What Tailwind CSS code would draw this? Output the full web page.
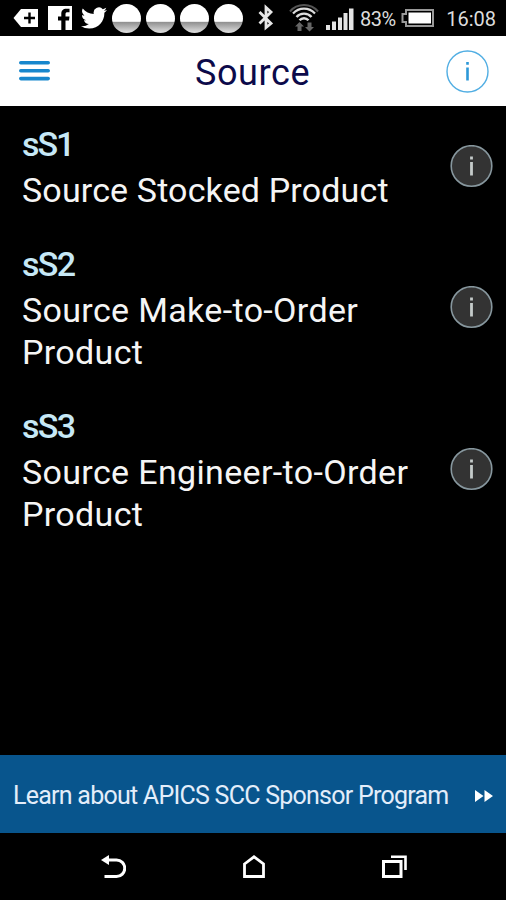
<!DOCTYPE html>
<html lang="en">

<head>
  <meta charset="UTF-8" />
  <meta name="viewport" content="width=device-width, initial-scale=1.0" />
  <title>Source</title>
  <script src="https://cdn.jsdelivr.net/npm/@tailwindcss/browser@4"></script>
</head>

<body class="bg-black font-['Roboto',sans-serif]">
  <div class="flex flex-col w-[506px] h-[900px] overflow-hidden bg-black">

    <!-- status bar -->
    <div class="flex items-center h-9 shrink-0 pl-3 pr-[10px] text-[#dcdcdc]">
      <svg class="w-[27px] h-9 shrink-0" viewBox="0 0 27 36">
        <path d="M1.500 18L9 9h17v18H9z" fill="#fff" />
        <path d="M17.500 12.500v11M12 18h11" stroke="#000" stroke-width="2.400" />
      </svg>
      <svg class="w-6 h-9 shrink-0 ml-[9px]" viewBox="0 0 24 36">
        <path d="M0 6h24v24h-6.500v-9.500h3.500l.5-4h-4v-2.300c0-1.300.6-1.900 2-1.900h2V8.700h-3c-3.600 0-5.200 2-5.200 5v2.800H10v4h3.300V30H0z" fill="#fff" />
      </svg>
      <svg class="w-[26px] h-9 shrink-0 ml-[9px]" viewBox="0 0 24 32">
        <path transform="translate(0 4)" fill="#fff" d="M23.950 4.570a10 10 0 0 1-2.820.78 4.960 4.960 0 0 0 2.160-2.730c-.95.56-2 .96-3.130 1.190a4.920 4.920 0 0 0-8.380 4.480C7.690 8.100 4.070 6.130 1.640 3.160a4.920 4.920 0 0 0 1.520 6.570 4.900 4.900 0 0 1-2.230-.61v.06a4.920 4.920 0 0 0 3.950 4.830 5 5 0 0 1-2.210.08 4.940 4.940 0 0 0 4.600 3.420A9.870 9.870 0 0 1 0 19.540a14 14 0 0 0 7.550 2.210c9.050 0 14-7.500 14-13.980 0-.21 0-.42-.02-.63a9.940 9.940 0 0 0 2.420-2.570z" />
      </svg>
      <div class="flex gap-[5px] ml-[5px]">
        <div class="size-[29px] rounded-full bg-linear-to-b from-white from-60% via-[#8f8f8f] via-62% to-[#d8d8d8] to-95%"></div>
        <div class="size-[29px] rounded-full bg-linear-to-b from-white from-60% via-[#8f8f8f] via-62% to-[#d8d8d8] to-95%"></div>
        <div class="size-[29px] rounded-full bg-linear-to-b from-white from-60% via-[#8f8f8f] via-62% to-[#d8d8d8] to-95%"></div>
        <div class="size-[29px] rounded-full bg-linear-to-b from-white from-60% via-[#8f8f8f] via-62% to-[#d8d8d8] to-95%"></div>
      </div>
      <svg class="w-4 h-9 shrink-0 ml-[15px]" viewBox="0 0 16 36" fill="none" stroke="#e6e6e6" stroke-width="2.800">
        <path d="M1.500 12L13 23.500 8 27.500V7.500l5 4.500L1.500 23.500" />
      </svg>
      <svg class="w-[30px] h-9 shrink-0 ml-[15px]" viewBox="0 0 30 36" fill="none">
        <path d="M1 11.500c7-8.600 21-8.600 28 0" stroke="#555" stroke-width="2" />
        <path d="M4 13.500c6-6.500 16-6.500 22 0" stroke="#ddd" stroke-width="2.200" />
        <path d="M7.500 17c4-4.500 11-4.500 15 0M10.500 20.300c2.500-2.800 6.500-2.800 9 0" stroke="#ddd" stroke-width="2.400" />
        <path d="M10.500 22l4.500 4.500h-2.500V31h-4v-4.500H6zM20.500 31.500L16 27h2.500v-4.500h4V27H25z" fill="#666" />
      </svg>
      <svg class="w-7 h-9 shrink-0 ml-[7px]" viewBox="0 0 28 36" fill="#e4e4e4">
        <path d="M0 25h4v5H0zM6 21.500h4V30H6zM12 17.500h4V30h-4zM17.500 13h4v17h-4zM23 8.500h4.500V30H23z" />
      </svg>
      <span class="w-[37px] ml-[6px] pt-[2px] text-[20px] tracking-[-0.5px] whitespace-nowrap">83%</span>
      <svg class="w-[33px] h-9 shrink-0 ml-1" viewBox="0 0 33 36">
        <path d="M5 10h27v16H5v-4H1.500v-8H5z" fill="none" stroke="#999" stroke-width="2" />
        <path d="M7.500 12.500h22.500v11H7.500z" fill="#fff" />
      </svg>
      <span class="ml-auto pt-[2px] text-[20px] whitespace-nowrap">16:08</span>
    </div>

    <!-- title bar -->
    <div class="flex items-center justify-between h-[70px] shrink-0 pl-[19px] pr-[17px] bg-white">
      <svg class="w-[31px] h-5" viewBox="0 0 31 20" stroke="#1787cd" stroke-width="3.600" stroke-linecap="round">
        <path d="M1.800 1.800h27.400M1.800 9.800h27.400M1.800 17.600h27.400" />
      </svg>
      <h1 class="ml-[9px] pt-[3px] text-[36px] leading-[42px] tracking-[0.6px] text-[#0c0a4a]">Source</h1>
      <svg class="size-[43px]" viewBox="0 0 43 43">
        <circle cx="21.500" cy="21.500" r="20.500" fill="none" stroke="#51aee3" stroke-width="1.400" />
        <path d="M21.500 17.500v13M21.500 12v2.700" stroke="#2d98d8" stroke-width="2.600" />
      </svg>
    </div>

    <!-- process list -->
    <div class="flex flex-col grow">
      <div class="flex items-center justify-between pl-[22px] pr-[13px]">
        <div class="flex flex-col gap-1 pt-[17px] pb-[15px] text-[34px] leading-[42px]">
          <div class="font-medium tracking-[-2px] text-[#c6e8f6]">sS1</div>
          <div class="tracking-[0.15px] whitespace-nowrap text-[#f5f5f5]">Source Stocked Product</div>
        </div>
        <svg class="size-[43px] shrink-0" viewBox="0 0 43 43">
          <circle cx="21.500" cy="21" r="20.300" fill="#333" stroke="#87979e" stroke-width="1.600" />
          <path d="M21.500 17v13.500M21.500 11.500v3" stroke="#c4cac9" stroke-width="2.800" />
        </svg>
      </div>
      <div class="flex items-center justify-between pl-[22px] pr-[13px]">
        <div class="flex flex-col gap-1 pt-[17px] pb-[15px] text-[34px] leading-[42px]">
          <div class="font-medium tracking-[-1.7px] text-[#c6e8f6]">sS2</div>
          <div class="tracking-[0.35px] whitespace-nowrap text-[#f5f5f5]">Source Make-to-Order<br />Product</div>
        </div>
        <svg class="size-[43px] shrink-0" viewBox="0 0 43 43">
          <circle cx="21.500" cy="21" r="20.300" fill="#333" stroke="#87979e" stroke-width="1.600" />
          <path d="M21.500 17v13.500M21.500 11.500v3" stroke="#c4cac9" stroke-width="2.800" />
        </svg>
      </div>
      <div class="flex items-center justify-between pl-[22px] pr-[13px]">
        <div class="flex flex-col gap-1 pt-[17px] pb-[15px] text-[34px] leading-[42px]">
          <div class="font-medium tracking-[-1.7px] text-[#c6e8f6]">sS3</div>
          <div class="tracking-[0.35px] whitespace-nowrap text-[#f5f5f5]">Source Engineer-to-Order<br />Product</div>
        </div>
        <svg class="size-[43px] shrink-0" viewBox="0 0 43 43">
          <circle cx="21.500" cy="21" r="20.300" fill="#333" stroke="#87979e" stroke-width="1.600" />
          <path d="M21.500 17v13.500M21.500 11.500v3" stroke="#c4cac9" stroke-width="2.800" />
        </svg>
      </div>
    </div>

    <!-- sponsor banner -->
    <div class="flex items-center justify-between h-[78px] shrink-0 pl-[13px] pr-[13px] bg-[#08558d] text-[#e3edfa]">
      <span class="pt-[3px] text-[25px] tracking-[-0.75px] whitespace-nowrap">Learn about APICS SCC Sponsor Program</span>
      <svg class="w-[18px] h-[14px] shrink-0 mt-[3px]" viewBox="0 0 18 14" fill="#fff">
        <path d="M0 1l8.500 6L0 13zM9.500 1L18 7l-8.500 6z" />
      </svg>
    </div>

    <!-- navigation bar -->
    <div class="flex items-center justify-between h-[67px] shrink-0 pl-[101px] pr-[99px]">
      <svg class="w-[25px] h-6" viewBox="0 0 25 24">
        <path d="M5 5h10.500a8 8 0 0 1 0 16.500H3.500" fill="none" stroke="#fff" stroke-width="3" />
        <path d="M0 5L8 0v10z" fill="#fff" />
      </svg>
      <svg class="w-[22px] h-6" viewBox="0 0 22 24" fill="none" stroke="#fff" stroke-width="2.800">
        <path d="M1.500 9L11 1.800 20.500 9v12.500h-19z" />
      </svg>
      <svg class="w-[25px] h-6" viewBox="0 0 25 24" fill="none" stroke="#fff">
        <path d="M1.500 6.500h17.500v15H1.500z" stroke-width="3" />
        <path d="M9 1.800h14.500V15" stroke-width="2.600" />
      </svg>
    </div>
  </div>
</body>

</html>
